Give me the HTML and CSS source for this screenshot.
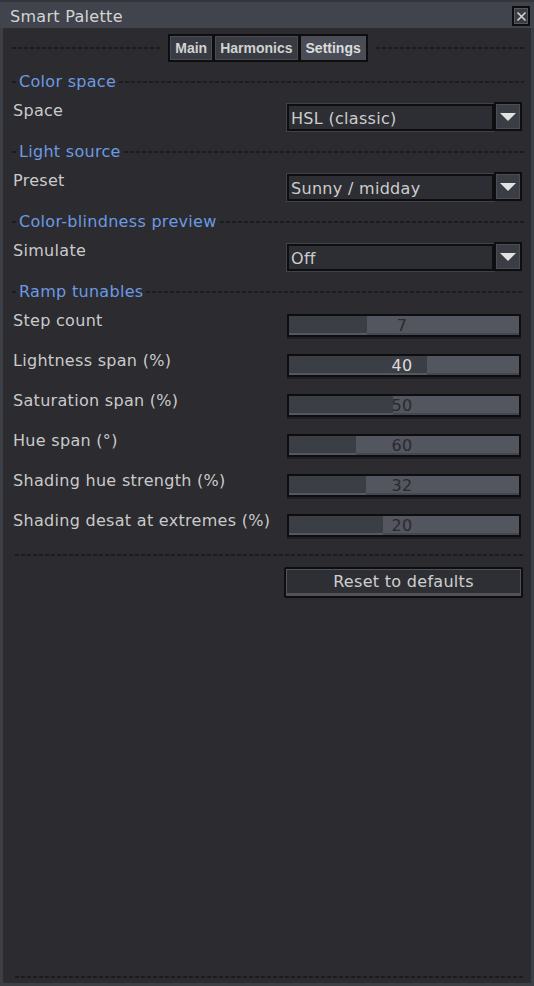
FILE: index.html
```html
<!DOCTYPE html>
<html>
<head>
<meta charset="utf-8">
<link rel="stylesheet" href="styles.css">
</head>
<body>
<div class="window">
  <div class="titlebar">
    <span class="title">Smart Palette</span>
    <div class="close">
      <svg width="11" height="11" viewBox="0 0 11 11"><path d="M1.5 1.5 L9.5 9.5 M9.5 1.5 L1.5 9.5" stroke="#d4d4d4" stroke-width="1.6" fill="none"/></svg>
    </div>
  </div>
  <div class="content">
    <div class="tabrow">
      <span class="dash"></span>
      <div class="tabs">
        <span class="tab">Main</span>
        <span class="tab">Harmonics</span>
        <span class="tab active">Settings</span>
      </div>
      <span class="dash"></span>
    </div>

    <div class="section-head"><span class="dash short"></span><span class="head-text">Color space</span><span class="dash"></span></div>
    <div class="row combo-row">
      <span class="label">Space</span>
      <div class="combo"><div class="field">HSL (classic)</div><div class="arrow"><span class="tri"></span></div></div>
    </div>

    <div class="section-head"><span class="dash short"></span><span class="head-text">Light source</span><span class="dash"></span></div>
    <div class="row combo-row">
      <span class="label">Preset</span>
      <div class="combo"><div class="field">Sunny / midday</div><div class="arrow"><span class="tri"></span></div></div>
    </div>

    <div class="section-head"><span class="dash short"></span><span class="head-text">Color-blindness preview</span><span class="dash"></span></div>
    <div class="row combo-row">
      <span class="label">Simulate</span>
      <div class="combo"><div class="field">Off</div><div class="arrow"><span class="tri"></span></div></div>
    </div>

    <div class="section-head"><span class="dash short"></span><span class="head-text">Ramp tunables</span><span class="dash"></span></div>
    <div class="row slider-row">
      <span class="label">Step count</span>
      <div class="slider"><div class="fill" style="width:34%"></div><span class="num">7</span></div>
    </div>
    <div class="row slider-row">
      <span class="label">Lightness span (%)</span>
      <div class="slider"><div class="fill" style="width:60%"></div><span class="num light">40</span></div>
    </div>
    <div class="row slider-row">
      <span class="label">Saturation span (%)</span>
      <div class="slider"><div class="fill" style="width:45%"></div><span class="num">50</span></div>
    </div>
    <div class="row slider-row">
      <span class="label">Hue span (°)</span>
      <div class="slider"><div class="fill" style="width:29%"></div><span class="num">60</span></div>
    </div>
    <div class="row slider-row">
      <span class="label">Shading hue strength (%)</span>
      <div class="slider"><div class="fill" style="width:33.5%"></div><span class="num">32</span></div>
    </div>
    <div class="row slider-row last">
      <span class="label">Shading desat at extremes (%)</span>
      <div class="slider"><div class="fill" style="width:41%"></div><span class="num">20</span></div>
    </div>

    <div class="sep"></div>
    <div class="actions"><div class="btn">Reset to defaults</div></div>
    <div class="spacer"></div>
    <div class="sep bottom"></div>
  </div>
</div>
</body>
</html>
```

FILE: styles.css
```css
* { box-sizing: border-box; }
html, body { margin: 0; padding: 0; background: #2b2b30; }
body {
  font-family: "DejaVu Sans", sans-serif;
  font-size: 16px;
  letter-spacing: 0.3px;
  color: #cacaca;
}
.window {
  width: 534px;
  height: 986px;
  display: flex;
  flex-direction: column;
  border-left: 3px solid #3d3f47;
  border-right: 3px solid #3d3f47;
  border-bottom: 3px solid #3d3f47;
  background: #2b2b30;
}
.titlebar {
  height: 28px;
  flex: none;
  background: #41444c;
  border-top: 2px solid #34363c;
  display: flex;
  align-items: flex-start;
  justify-content: space-between;
  margin: 0 -3px;
  padding: 3px 4px 0 10px;
}
.title {
  line-height: 24px;
  color: #d4d4d4;
}
.close {
  width: 18px;
  height: 20px;
  margin-top: 1px;
  background: #3a3c43;
  border: 2px solid #0e0e10;
  box-shadow: inset 0 0 0 1px #55575f;
  display: flex;
  align-items: center;
  justify-content: center;
}
.close svg { display: block; }
.content {
  flex: 1;
  display: flex;
  flex-direction: column;
  padding: 0 7px 5px 9px;
}
.dash {
  flex: 1;
  height: 2px;
  background: repeating-linear-gradient(90deg, #1c1c20 0 4px, transparent 4px 6px);
}
.dash.short { flex: none; width: 5px; }
.tabrow {
  height: 28px;
  margin: 6px 0 10px;
  display: flex;
  align-items: center;
  gap: 8px;
}
.tabs { display: flex; }
.tab {
  height: 28px;
  padding: 0 5px;
  border: 2px solid #0e0e10;
  background: #393b42;
  box-shadow: inset 0 0 0 1px #4a4c54;
  font-family: "Liberation Sans", sans-serif;
  font-weight: bold;
  font-size: 14px;
  letter-spacing: 0;
  line-height: 24px;
  color: #d2d2d2;
}
.tab + .tab { margin-left: -1px; }
.tab.active { background: #4a4d56; box-shadow: none; color: #dcdcdc; }
.section-head {
  height: 20px;
  margin-bottom: 12px;
  display: flex;
  align-items: center;
}
.head-text {
  color: #6c9ae2;
  line-height: 20px;
  padding: 0 3px 0 2px;
}
.row {
  display: grid;
  grid-template-columns: 274px 235px;
  padding-left: 1px;
}
.label {
  line-height: 12px;
  margin-top: 1px;
  white-space: nowrap;
}
.combo-row { height: 27px; margin-bottom: 11px; }
.combo { display: flex; height: 27px; }
.field {
  flex: 1;
  height: 27px;
  border: 2px solid #0e0e10;
  box-shadow: 0 0 0 1px #40424a;
  background: #2d2e33;
  line-height: 23px;
  padding: 1px 0 0 2px;
  color: #cdcdcd;
  white-space: nowrap;
}
.arrow {
  width: 28px;
  height: 29px;
  margin-top: -2px;
  border: 2px solid #0e0e10;
  background: #3b3d45;
  box-shadow: inset 0 0 0 1px #4b4d55;
  display: flex;
  align-items: center;
  justify-content: center;
}
.tri {
  width: 0;
  height: 0;
  border-left: 8px solid transparent;
  border-right: 8px solid transparent;
  border-top: 8px solid #e2e2e2;
  margin-top: 1px;
}
.slider-row { height: 25px; margin-bottom: 15px; }
.slider {
  position: relative;
  width: 234px;
  height: 23px;
  border: 2px solid #0e0e10;
  background: #53565e;
  box-shadow: inset 0 -2px 0 #45474e, 0 2px 0 #1f1f23;
  display: flex;
  align-items: flex-start;
  justify-content: center;
}
.fill {
  position: absolute;
  left: 0;
  top: 0;
  bottom: 0;
  background: #3c3e45;
  box-shadow: inset 0 -2px 0 #55585f;
}
.num {
  position: relative;
  line-height: 19px;
  color: #2a2a2f;
  margin-left: -4px;
}
.num.light { color: #dcdcdc; }
.sep {
  height: 2px;
  flex: none;
  margin: 0 0 11px 3px;
  background: repeating-linear-gradient(90deg, #1c1c20 0 4px, transparent 4px 6px);
}
.actions {
  display: flex;
  justify-content: flex-end;
  padding-right: 1px;
}
.btn {
  width: 239px;
  height: 31px;
  border: 2px solid #0e0e10;
  border-radius: 2px;
  background: #2e2f35;
  box-shadow: inset 0 0 0 1px #50535a, inset 0 -3px 0 #50535a;
  text-align: center;
  line-height: 25px;
  color: #cfcfcf;
}
.spacer { flex: 1; }
.sep.bottom { margin: 0 0 0 3px; }
```
